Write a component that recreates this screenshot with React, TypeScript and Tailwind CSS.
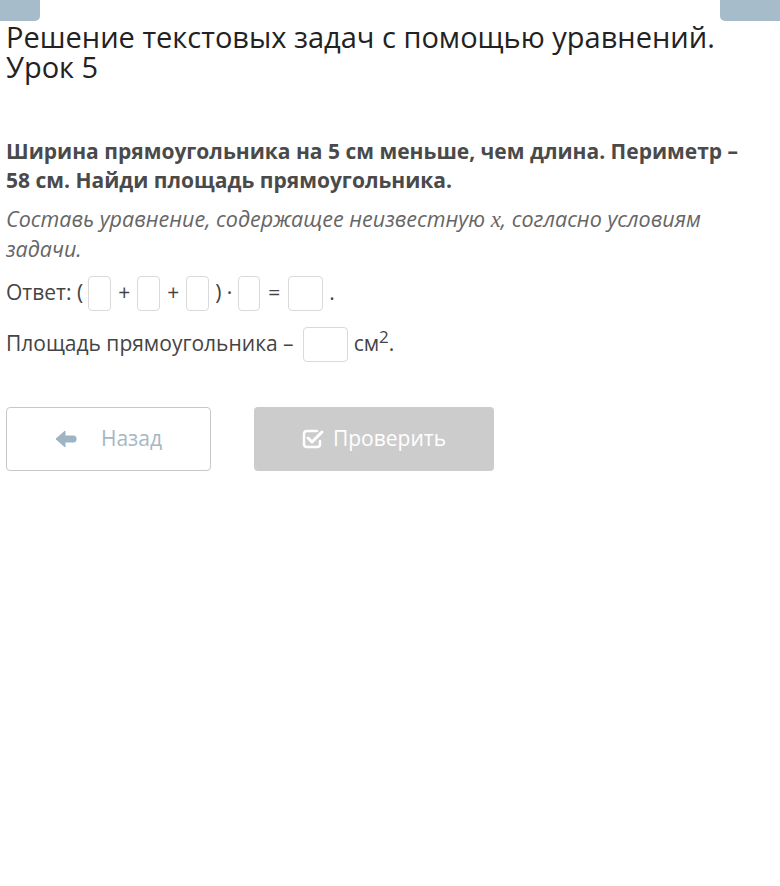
import React from "react";

function Box({ w = "w-[23px]" }: { w?: string }) {
  return <span className={`inline-block ${w} h-[35px] border border-[#d9d9d9] rounded-[4px] bg-white align-middle`} />;
}

export default function App() {
  return (
    <div className="w-[780px] h-[886px] bg-white relative overflow-hidden" style={{ fontFamily: '"Open Sans", sans-serif' }}>
      <div className="absolute left-0 top-0 w-[40px] h-[21px] bg-[#a7bccb] rounded-br-[5px]" />
      <div className="absolute right-0 top-0 w-[60px] h-[21px] bg-[#a7bccb] rounded-bl-[5px]" />
      <div className="pt-[22px] px-[6px]">
        <h1 className="text-[29px] leading-[30px] text-[#222]">
          Решение текстовых задач с помощью уравнений.
          <br />
          Урок 5
        </h1>
        <p className="mt-[55px] text-[21px] leading-[29px] font-bold text-[#4a4a4a]">
          Ширина прямоугольника на 5 см меньше, чем длина. Периметр – 58{"\u00a0"}см. Найди площадь прямоугольника.
        </p>
        <p className="mt-[9px] text-[21.5px] leading-[29px] italic text-[#666]">
          Составь уравнение, содержащее неизвестную <span className="text-[23px]" style={{ fontFamily: '"Liberation Serif", serif' }}>x</span>, согласно условиям задачи.
        </p>
        <div className="mt-[12px] flex items-center text-[21px] text-[#444] h-[36px]">
          <span>Ответ: (</span>
          <span className="ml-[5px]"><Box /></span>
          <span className="mx-[7px]">+</span>
          <Box />
          <span className="mx-[7px]">+</span>
          <Box />
          <span className="mx-[6px]">) ·</span>
          <Box w="w-[22px]" />
          <span className="mx-[8px]">=</span>
          <Box w="w-[35px]" />
          <span className="ml-[6px]">.</span>
        </div>
        <div className="mt-[15px] flex items-center text-[21px] text-[#444] h-[36px]">
          <span>Площадь прямоугольника –</span>
          <span className="ml-[9px]"><Box w="w-[45px]" /></span>
          <span className="ml-[6px]">см<sup className="text-[17px]">2</sup>.</span>
        </div>
        <div className="mt-[45px] flex gap-[43px]">
          <button className="w-[205px] h-[64px] border border-[#c8c8c8] rounded-[4px] bg-white flex items-center justify-center gap-[24px] text-[21px] text-[#a6b7c4]">
            <svg width="22" height="18" viewBox="0 0 22 18"><path d="M1 9 L10 1 L10 6 L19 6 Q21 6 21 8 L21 10 Q21 12 19 12 L10 12 L10 17 Z" fill="#9fb4c3" strokeLinejoin="round" stroke="#9fb4c3" strokeWidth="1" /></svg>
            <span>Назад</span>
          </button>
          <button className="w-[240px] h-[64px] rounded-[4px] bg-[#cccccc] flex items-center justify-center gap-[8px] text-[21px] text-white">
            <svg width="23" height="20" viewBox="0 0 23 20" fill="none"><path d="M15 2 L5 2 Q2 2 2 5 L2 15 Q2 18 5 18 L15 18 Q18 18 18 15 L18 12" stroke="white" strokeWidth="2.5" strokeLinecap="round" /><path d="M6 9 L10 13 L20 3" stroke="white" strokeWidth="3" strokeLinecap="round" strokeLinejoin="round" /></svg>
            <span>Проверить</span>
          </button>
        </div>
      </div>
    </div>
  );
}
